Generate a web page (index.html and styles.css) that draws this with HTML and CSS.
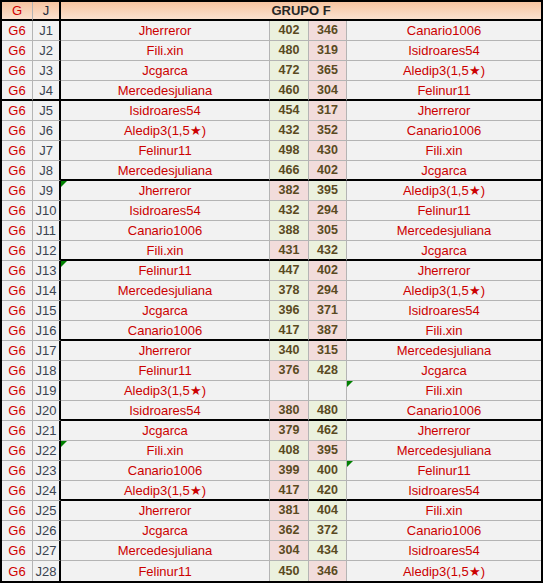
FILE: index.html
```html
<!DOCTYPE html>
<html lang="es">
<head>
<meta charset="utf-8">
<title>Grupo F</title>
<link rel="stylesheet" href="styles.css">
</head>
<body>
<div class="sheet">
  <div class="row head">
    <div class="c g">G</div>
    <div class="c j">J</div>
    <div class="c title">GRUPO F</div>
  </div>
  <div class="row"><div class="c g">G6</div><div class="c j">J1</div><div class="c n">Jherreror</div><div class="c s win">402</div><div class="c s lose">346</div><div class="c n last">Canario1006</div></div>
  <div class="row"><div class="c g">G6</div><div class="c j">J2</div><div class="c n">Fili.xin</div><div class="c s win">480</div><div class="c s lose">319</div><div class="c n last">Isidroares54</div></div>
  <div class="row"><div class="c g">G6</div><div class="c j">J3</div><div class="c n">Jcgarca</div><div class="c s win">472</div><div class="c s lose">365</div><div class="c n last">Aledip3(1,5★)</div></div>
  <div class="row sep"><div class="c g">G6</div><div class="c j">J4</div><div class="c n">Mercedesjuliana</div><div class="c s win">460</div><div class="c s lose">304</div><div class="c n last">Felinur11</div></div>
  <div class="row"><div class="c g">G6</div><div class="c j">J5</div><div class="c n">Isidroares54</div><div class="c s win">454</div><div class="c s lose">317</div><div class="c n last">Jherreror</div></div>
  <div class="row"><div class="c g">G6</div><div class="c j">J6</div><div class="c n">Aledip3(1,5★)</div><div class="c s win">432</div><div class="c s lose">352</div><div class="c n last">Canario1006</div></div>
  <div class="row"><div class="c g">G6</div><div class="c j">J7</div><div class="c n">Felinur11</div><div class="c s win">498</div><div class="c s lose">430</div><div class="c n last">Fili.xin</div></div>
  <div class="row psep"><div class="c g">G6</div><div class="c j">J8</div><div class="c n">Mercedesjuliana</div><div class="c s win">466</div><div class="c s lose">402</div><div class="c n last">Jcgarca</div></div>
  <div class="row"><div class="c g">G6</div><div class="c j">J9</div><div class="c n note">Jherreror</div><div class="c s lose">382</div><div class="c s win">395</div><div class="c n last">Aledip3(1,5★)</div></div>
  <div class="row"><div class="c g">G6</div><div class="c j">J10</div><div class="c n">Isidroares54</div><div class="c s win">432</div><div class="c s lose">294</div><div class="c n last">Felinur11</div></div>
  <div class="row"><div class="c g">G6</div><div class="c j">J11</div><div class="c n">Canario1006</div><div class="c s win">388</div><div class="c s lose">305</div><div class="c n last">Mercedesjuliana</div></div>
  <div class="row psep"><div class="c g">G6</div><div class="c j">J12</div><div class="c n">Fili.xin</div><div class="c s lose">431</div><div class="c s win">432</div><div class="c n last">Jcgarca</div></div>
  <div class="row"><div class="c g">G6</div><div class="c j">J13</div><div class="c n note">Felinur11</div><div class="c s win">447</div><div class="c s lose">402</div><div class="c n last">Jherreror</div></div>
  <div class="row"><div class="c g">G6</div><div class="c j">J14</div><div class="c n">Mercedesjuliana</div><div class="c s win">378</div><div class="c s lose">294</div><div class="c n last">Aledip3(1,5★)</div></div>
  <div class="row"><div class="c g">G6</div><div class="c j">J15</div><div class="c n">Jcgarca</div><div class="c s win">396</div><div class="c s lose">371</div><div class="c n last">Isidroares54</div></div>
  <div class="row psep"><div class="c g">G6</div><div class="c j">J16</div><div class="c n">Canario1006</div><div class="c s win">417</div><div class="c s lose">387</div><div class="c n last">Fili.xin</div></div>
  <div class="row"><div class="c g">G6</div><div class="c j">J17</div><div class="c n">Jherreror</div><div class="c s win">340</div><div class="c s lose">315</div><div class="c n last">Mercedesjuliana</div></div>
  <div class="row"><div class="c g">G6</div><div class="c j">J18</div><div class="c n">Felinur11</div><div class="c s lose">376</div><div class="c s win">428</div><div class="c n last">Jcgarca</div></div>
  <div class="row"><div class="c g">G6</div><div class="c j">J19</div><div class="c n">Aledip3(1,5★)</div><div class="c s"></div><div class="c s"></div><div class="c n last note">Fili.xin</div></div>
  <div class="row psep"><div class="c g">G6</div><div class="c j">J20</div><div class="c n">Isidroares54</div><div class="c s lose">380</div><div class="c s win">480</div><div class="c n last">Canario1006</div></div>
  <div class="row"><div class="c g">G6</div><div class="c j">J21</div><div class="c n">Jcgarca</div><div class="c s lose">379</div><div class="c s win">462</div><div class="c n last">Jherreror</div></div>
  <div class="row"><div class="c g">G6</div><div class="c j">J22</div><div class="c n note">Fili.xin</div><div class="c s win">408</div><div class="c s lose">395</div><div class="c n last">Mercedesjuliana</div></div>
  <div class="row"><div class="c g">G6</div><div class="c j">J23</div><div class="c n">Canario1006</div><div class="c s lose">399</div><div class="c s win">400</div><div class="c n last note">Felinur11</div></div>
  <div class="row psep"><div class="c g">G6</div><div class="c j">J24</div><div class="c n">Aledip3(1,5★)</div><div class="c s lose">417</div><div class="c s win">420</div><div class="c n last">Isidroares54</div></div>
  <div class="row"><div class="c g">G6</div><div class="c j">J25</div><div class="c n">Jherreror</div><div class="c s lose">381</div><div class="c s win">404</div><div class="c n last">Fili.xin</div></div>
  <div class="row"><div class="c g">G6</div><div class="c j">J26</div><div class="c n">Jcgarca</div><div class="c s lose">362</div><div class="c s win">372</div><div class="c n last">Canario1006</div></div>
  <div class="row"><div class="c g">G6</div><div class="c j">J27</div><div class="c n">Mercedesjuliana</div><div class="c s lose">304</div><div class="c s win">434</div><div class="c n last">Isidroares54</div></div>
  <div class="row end"><div class="c g">G6</div><div class="c j">J28</div><div class="c n">Felinur11</div><div class="c s win">450</div><div class="c s lose">346</div><div class="c n last">Aledip3(1,5★)</div></div>
</div>
</body>
</html>
```
FILE: styles.css
```css
html, body {
  margin: 0;
  padding: 0;
  background: #ffffff;
}

.sheet {
  width: 543px;
  box-sizing: border-box;
  border: 2px solid #000;
  font-family: "Liberation Sans", Arial, sans-serif;
  font-size: 13px;
  background: #f2f2f2;
}

.row {
  display: grid;
  grid-template-columns: 31px 28px 209px 39px 38px 1fr;
  height: 20px;
}

.c {
  box-sizing: border-box;
  height: 20px;
  border-right: 1px solid #b4b4b4;
  border-bottom: 1px solid #b4b4b4;
  display: flex;
  align-items: center;
  justify-content: center;
  line-height: 19px;
  white-space: nowrap;
  position: relative;
}

.c.last {
  border-right: none;
}

.g {
  color: #d00000;
}

.j {
  color: #3a4350;
  border-right: 2px solid #000;
}

.n {
  color: #cc0000;
}

.s {
  color: #5a4a22;
  font-weight: bold;
  font-size: 12.5px;
}

.win {
  background: #ebf1de;
}

.lose {
  background: #f2dcdb;
}

.head {
  height: 19px;
  grid-template-columns: 31px 28px 1fr;
}

.head .c {
  height: 19px;
  border-bottom: 2px solid #000;
  background: linear-gradient(#f6c4a0, #fbe1cf);
  line-height: 17px;
}

.head .g {
  color: #d00000;
}

.head .j {
  color: #1f2b3a;
}

.head .title {
  border-right: none;
  font-weight: bold;
  color: #262626;
}

.sep .c {
  border-bottom: 2px solid #000;
}

.psep .n,
.psep .s {
  border-bottom: 2px solid #000;
}

.end .c {
  border-bottom: none;
}

.note::before {
  content: "";
  position: absolute;
  left: 0;
  top: 0;
  border-top: 6px solid #008000;
  border-right: 6px solid transparent;
}
```
